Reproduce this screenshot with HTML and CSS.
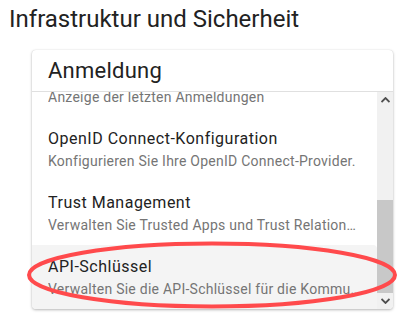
FILE: index.html
```html
<!DOCTYPE html>
<html lang="de">
<head>
<meta charset="utf-8">
<link rel="stylesheet" href="styles.css">
</head>
<body>
<h1 class="page-title">Infrastruktur und Sicherheit</h1>
<div class="card">
  <div class="card-header">Anmeldung</div>
  <div class="card-body">
    <div class="list-viewport">
      <ul class="list">
        <li class="item">
          <div class="item-title">Letzte Anmeldungen</div>
          <div class="item-sub">Anzeige der letzten Anmeldungen</div>
        </li>
        <li class="item">
          <div class="item-title">OpenID Connect-Konfiguration</div>
          <div class="item-sub">Konfigurieren Sie Ihre OpenID Connect-Provider.</div>
        </li>
        <li class="item">
          <div class="item-title">Trust Management</div>
          <div class="item-sub">Verwalten Sie Trusted Apps und Trust Relationships.</div>
        </li>
        <li class="item item-active">
          <div class="item-title">API-Schlüssel</div>
          <div class="item-sub">Verwalten Sie die API-Schlüssel für die Kommunikation mit externen Systemen.</div>
        </li>
      </ul>
    </div>
    <div class="scrollbar">
      <div class="sb-btn">
        <svg width="9" height="6" viewBox="0 0 9 6"><path d="M0.5 5 L4.5 1 L8.5 5" fill="none" stroke="#505050" stroke-width="1.8"/></svg>
      </div>
      <div class="sb-track"><div class="sb-thumb"></div></div>
      <div class="sb-btn">
        <svg width="9" height="6" viewBox="0 0 9 6"><path d="M0.5 1 L4.5 5 L8.5 1" fill="none" stroke="#505050" stroke-width="1.8"/></svg>
      </div>
    </div>
  </div>
</div>
<svg class="annotation" width="409" height="321" viewBox="0 0 409 321">
  <ellipse cx="212" cy="275" rx="183" ry="31.5" fill="none" stroke="#ff4a4c" stroke-width="4"/>
</svg>
</body>
</html>
```
FILE: styles.css
```css
html, body {
  margin: 0;
  padding: 0;
  background: #fff;
}
body {
  font-family: Roboto, "Noto Sans", Arial, sans-serif;
  color: #212121;
  width: 409px;
  height: 321px;
  overflow: hidden;
  position: relative;
}
.page-title {
  margin: 0;
  padding: 3px 0 0 9px;
  font-size: 24px;
  font-weight: 400;
  line-height: 32px;
  color: #222;
}
.card {
  margin: 15px 0 0 32px;
  width: 361px;
  height: 259px;
  background: #fff;
  border-radius: 4px;
  box-shadow: 0 1px 3px rgba(0,0,0,0.28), 0 0 1px rgba(0,0,0,0.15);
  display: flex;
  flex-direction: column;
  overflow: hidden;
}
.card-header {
  height: 41px;
  border-bottom: 1px solid #e0e0e0;
  padding-left: 16px;
  font-size: 22px;
  letter-spacing: 0.25px;
  line-height: 41px;
  color: #222;
  flex: none;
}
.card-body {
  flex: 1;
  display: flex;
  min-height: 0;
}
.list-viewport {
  flex: 1;
  overflow: hidden;
}
.list {
  list-style: none;
  margin: -39px 0 0;
  padding: 0;
}
.item {
  height: 64px;
  box-sizing: border-box;
  padding: 10px 16px;
}
.item-active {
  background: #f4f4f4;
  border-top-right-radius: 4px;
}
.item-title {
  font-size: 16px;
  line-height: 24px;
  letter-spacing: 0.5px;
  color: #222;
  white-space: nowrap;
  overflow: hidden;
  text-overflow: ellipsis;
}
.item-sub {
  font-size: 14px;
  line-height: 20px;
  letter-spacing: 0.25px;
  color: #757575;
  white-space: nowrap;
  overflow: hidden;
  text-overflow: ellipsis;
}
.scrollbar {
  width: 16px;
  flex: none;
  background: #f1f1f1;
  display: flex;
  flex-direction: column;
}
.sb-btn {
  height: 16px;
  display: flex;
  align-items: center;
  justify-content: center;
  flex: none;
}
.sb-track {
  flex: 1;
  display: flex;
  flex-direction: column;
  justify-content: flex-end;
}
.sb-thumb {
  height: 93px;
  background: #c8c8c8;
}
.annotation {
  position: absolute;
  left: 0;
  top: 0;
  pointer-events: none;
}
```
